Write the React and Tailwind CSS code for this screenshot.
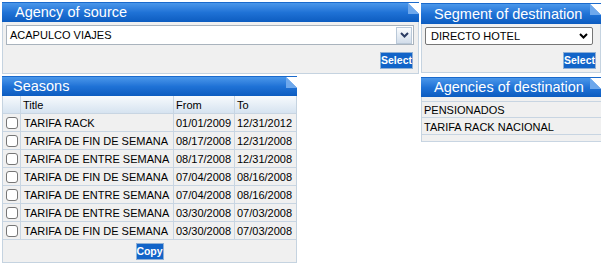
import React from "react";

const Fold = () => (
  <svg className="absolute right-0 top-0" width="11" height="11" viewBox="0 0 11 11">
    <polygon points="0,0 11,0 11,11" fill="#ffffff" />
    <polygon points="0,0 0,11 11,11" fill="#6ea8ec" />
  </svg>
);

function Header({ title, className }) {
  return (
    <div
      className={`relative flex items-center border-t border-[#1a6acc] bg-gradient-to-b from-[#4a97ea] via-[#1f72d6] to-[#0c5cc0] text-[14.5px] leading-none text-white ${className}`}
    >
      <span>{title}</span>
      <Fold />
    </div>
  );
}

function Btn({ children, className }) {
  return (
    <div
      className={`flex h-[17px] items-center justify-center border border-[#8fb0d6] bg-[#1264c8] text-[10.5px] font-bold leading-none text-white ${className}`}
    >
      {children}
    </div>
  );
}

const seasons = [
  ["TARIFA RACK", "01/01/2009", "12/31/2012"],
  ["TARIFA DE FIN DE SEMANA", "08/17/2008", "12/31/2008"],
  ["TARIFA DE ENTRE SEMANA", "08/17/2008", "12/31/2008"],
  ["TARIFA DE FIN DE SEMANA", "07/04/2008", "08/16/2008"],
  ["TARIFA DE ENTRE SEMANA", "07/04/2008", "08/16/2008"],
  ["TARIFA DE ENTRE SEMANA", "03/30/2008", "07/03/2008"],
  ["TARIFA DE FIN DE SEMANA", "03/30/2008", "07/03/2008"],
];

export default function App() {
  return (
    <div className="flex h-[264px] w-[601px] gap-[2px] bg-white pl-[2px] pt-[2px] font-['Liberation_Sans',Arial,sans-serif] text-[11px] text-black">
      {/* Left column */}
      <div className="flex w-[417px] flex-col">
        <div>
          <Header title="Agency of source" className="h-[20px] pl-[13px]" />
          <div className="h-[52px] border border-t-0 border-[#c5d3e0] bg-[#f0f0f0] px-[3px] pt-[3px]">
            <div className="flex h-[20px] w-[408px] items-center border border-[#a9b3bd] bg-white pr-[1px]">
              <span className="flex-1 pl-[3px] pt-[1px] leading-none">ACAPULCO VIAJES</span>
              <div className="flex h-[17px] w-[16px] items-center justify-center border border-[#b9c8d8] bg-gradient-to-b from-[#fafcfe] to-[#d2ddea]">
                <svg width="9" height="6" viewBox="0 0 9 6">
                  <polyline points="1,1 4.5,4.5 8,1" fill="none" stroke="#2b3c63" strokeWidth="2" />
                </svg>
              </div>
            </div>
            <div className="mt-[7px] flex justify-end pr-[2px]">
              <Btn className="w-[33px]">Select</Btn>
            </div>
          </div>
        </div>

        <div className="mt-[2px] w-[295px]">
          <Header title="Seasons" className="h-[20px] pl-[11px]" />
          <div className="h-[167px] border border-t-0 border-[#c5d3e0] bg-[#f0f0f0]">
            <div className="grid grid-cols-[18px_153px_61px_61px]">
              <div className="h-[18px] border-b border-r border-[#c8d5e2] bg-gradient-to-b from-[#f7fafd] to-[#d6e3f0]" />
              <div className="flex h-[18px] items-center border-b border-r border-[#c8d5e2] bg-gradient-to-b from-[#f7fafd] to-[#d6e3f0] pl-[2px] pt-[2px]">Title</div>
              <div className="flex h-[18px] items-center border-b border-r border-[#c8d5e2] bg-gradient-to-b from-[#f7fafd] to-[#d6e3f0] pl-[2px] pt-[2px]">From</div>
              <div className="flex h-[18px] items-center border-b border-[#c8d5e2] bg-gradient-to-b from-[#f7fafd] to-[#d6e3f0] pl-[2px] pt-[2px]">To</div>
              {seasons.map((r, i) => (
                <React.Fragment key={i}>
                  <div className="flex h-[18px] items-center justify-center border-b border-r border-[#c8d5e2] pt-[1px]">
                    <div className="h-[12px] w-[12px] rounded-[3px] border border-[#767676] bg-white" />
                  </div>
                  <div className="flex h-[18px] items-center border-b border-r border-[#c8d5e2] pl-[3px] pt-[2px]">{r[0]}</div>
                  <div className="flex h-[18px] items-center border-b border-r border-[#c8d5e2] pl-[2px] pt-[2px]">{r[1]}</div>
                  <div className="flex h-[18px] items-center border-b border-[#c8d5e2] pl-[2px] pt-[2px]">{r[2]}</div>
                </React.Fragment>
              ))}
            </div>
            <div className="mt-[3px] flex justify-center">
              <Btn className="w-[28px]">Copy</Btn>
            </div>
          </div>
        </div>
      </div>

      {/* Right column */}
      <div className="flex w-[180px] flex-col pt-[1px]">
        <div>
          <Header title="Segment of destination" className="h-[21px] pl-[13px]" />
          <div className="h-[49px] border border-t-0 border-[#c5d3e0] bg-[#f0f0f0] pl-[3px] pr-[4px] pt-[3px]">
            <div className="flex h-[18px] w-[168px] items-center rounded-[2px] border border-[#767676] bg-white pl-[5px] pr-[4px]">
              <span className="flex-1 pt-[1px] leading-none">DIRECTO HOTEL</span>
              <svg width="9" height="6" viewBox="0 0 9 6">
                <polyline points="1,1 4.5,4.5 8,1" fill="none" stroke="#000" strokeWidth="2" />
              </svg>
            </div>
            <div className="mt-[7px] flex justify-end">
              <Btn className="w-[33px]">Select</Btn>
            </div>
          </div>
        </div>

        <div className="mt-[4px]">
          <Header title="Agencies of destination" className="h-[20px] pl-[13px]" />
          <div className="border-l border-[#c5d3e0] bg-[#f0f0f0]">
            <div className="h-[5px] border-b border-[#c8d5e2]" />
            <div className="flex h-[16px] items-center border-b border-[#c8d5e2] pl-[2px] pt-[2px]">PENSIONADOS</div>
            <div className="flex h-[17px] items-center border-b border-[#c8d5e2] pl-[2px] pt-[2px]">TARIFA RACK NACIONAL</div>
            <div className="h-[7px] border-b border-[#c8d5e2]" />
          </div>
        </div>
      </div>
    </div>
  );
}
